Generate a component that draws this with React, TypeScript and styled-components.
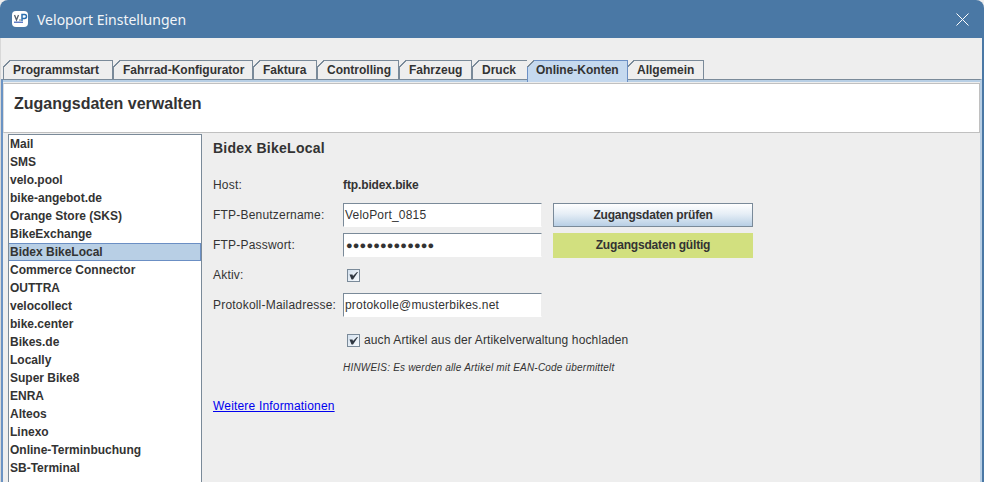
import React from "react";
import styled, { createGlobalStyle } from "styled-components";

const Global = createGlobalStyle`
  html, body { margin: 0; padding: 0; width: 984px; height: 482px; overflow: hidden; background: #eeeeee; }
  * { box-sizing: border-box; }
  body { font-family: "Liberation Sans", Arial, sans-serif; color: #333333; }
`;

const Win = styled.div`
  width: 984px;
  height: 482px;
  display: flex;
  flex-direction: column;
  overflow: hidden;
  background: #eeeeee;
`;
const TitleBar = styled.div`
  height: 38px;
  flex: none;
  background: #4a78a5;
  border-radius: 8px 8px 0 0;
  display: flex;
  align-items: center;
  padding: 0 15px 0 12px;
  gap: 9px;
  color: #f2f5f8;
`;
const TitleText = styled.span`
  flex: 1;
  font-family: "Noto Sans", "Open Sans", sans-serif;
  font-size: 14px;
`;
const Frame = styled.div`
  flex: 1;
  min-height: 0;
  padding: 22px 0 0 0;
  border-right: 2px solid #4a78a5;
  border-left: 1px solid #d8d8d8;
  display: flex;
  flex-direction: column;
`;
const TabStrip = styled.div`
  height: 19px;
  flex: none;
  display: flex;
  padding-left: 2px;
  position: relative;
  z-index: 1;
`;
const Tab = styled.div<{ $w: number; $active?: boolean }>`
  position: relative;
  width: ${(p) => p.$w}px;
  height: ${(p) => (p.$active ? 22 : 20)}px;
  flex: none;
  margin-right: ${(p) => (p.$active ? -1 : 0)}px;
  margin-left: ${(p) => (p.$active ? -1 : 0)}px;
  padding-left: ${(p) => (p.$active ? 8 : 9)}px;
  font-size: 12px;
  font-weight: 700;
  line-height: 18px;
  color: #333333;
  white-space: nowrap;
  background: ${(p) => (p.$active ? "#c5d9ef" : "#eeeeee")};
  border: 1px solid ${(p) => (p.$active ? "#6b8fc4" : "#7a8a99")};
  border-bottom: ${(p) => (p.$active ? "none" : "1px solid #7a8a99")};
  z-index: ${(p) => (p.$active ? 2 : 1)};
  &::before {
    content: "";
    position: absolute;
    left: -1px;
    top: -1px;
    width: 7px;
    height: 7px;
    background: linear-gradient(135deg, #eeeeee 0 48%, #7a8a99 48% 62%, transparent 62%);
  }
`;
const Pane = styled.div`
  flex: 1;
  min-height: 0;
  border-top: 1px solid #7a8a99;
  border-left: 2px solid #6a93c4;
  border-right: 2px solid #b8cfe5;
  padding-top: 3px;
  background: #eeeeee;
  box-shadow: inset 0 2px 0 #b8cfe5;
  display: flex;
  flex-direction: column;
`;
const Header = styled.div`
  height: 50px;
  flex: none;
  background: #ffffff;
  border-top: 1px solid #c0c0c0;
  border-right: 1px solid #c0c0c0;
  border-bottom: 1px solid #c0c0c0;
  border-left: 1px solid #dcdcdc;
  padding: 10px 0 0 10px;
  font-size: 16px;
  font-weight: 700;
  line-height: 20px;
  color: #333333;
`;
const Body = styled.div`
  flex: 1;
  min-height: 0;
  display: flex;
  padding-top: 1px;
`;
const List = styled.div`
  margin-left: 5px;
  width: 194px;
  flex: none;
  background: #ffffff;
  border: 1px solid #7a8a99;
  border-bottom: none;
`;
const Row = styled.div<{ $sel?: boolean }>`
  height: 18px;
  padding-left: 1px;
  font-size: 12px;
  font-weight: 700;
  line-height: 16px;
  color: #333333;
  white-space: nowrap;
  border: 1px solid ${(p) => (p.$sel ? "#6b8fc4" : "transparent")};
  border-left: 0;
  background: ${(p) => (p.$sel ? "#b8cfe5" : "transparent")};
`;
const Detail = styled.div`
  flex: 1;
  padding: 6px 0 0 11px;
  display: flex;
  flex-direction: column;
`;
const DetailTitle = styled.div`
  font-size: 14px;
  font-weight: 700;
  letter-spacing: 0.25px;
  line-height: 16px;
  height: 28px;
`;
const FormGrid = styled.div`
  margin-top: 2px;
  display: grid;
  grid-template-columns: 130px 199px 11px 200px;
  grid-auto-rows: 30px;
  align-items: center;
`;
const Label = styled.div`
  font-size: 12px;
  letter-spacing: 0.2px;
  white-space: nowrap;
  grid-column: 1;
`;
const HostValue = styled.div`
  grid-column: 2;
  font-size: 12px;
  font-weight: 700;
  letter-spacing: -0.12px;
`;
const Field = styled.div<{ $pw?: boolean }>`
  grid-column: 2;
  height: 24px;
  background: #ffffff;
  border-top: 1px solid #7a8a99;
  border-left: 1px solid #7a8a99;
  border-right: 1px solid #eeeeee;
  border-bottom: 1px solid #ffffff;
  padding-left: ${(p) => (p.$pw ? 2 : 1)}px;
  font-size: ${(p) => (p.$pw ? 11 : 12)}px;
  letter-spacing: ${(p) => (p.$pw ? "0.15px" : "0.2px")};
  line-height: 22px;
  white-space: nowrap;
  overflow: hidden;
`;
const PrimaryButton = styled.div`
  grid-column: 4;
  height: 24px;
  background: linear-gradient(#ffffff, #e6eef6 45%, #b8cfe5);
  border: 1px solid #7a8a99;
  font-size: 12px;
  font-weight: 700;
  letter-spacing: -0.18px;
  line-height: 22px;
  text-align: center;
`;
const Status = styled.div`
  grid-column: 4;
  height: 25px;
  background: #d2e07f;
  font-size: 12px;
  font-weight: 700;
  letter-spacing: -0.18px;
  line-height: 25px;
  text-align: center;
`;
const CheckBox = styled.span`
  width: 13px;
  height: 13px;
  flex: none;
  display: inline-flex;
  align-items: center;
  justify-content: center;
  background: linear-gradient(135deg, #d4e1ee, #f6f9fc);
  border: 1px solid #7a8a99;
`;
const CheckCell = styled.div`
  grid-column: 2;
  padding-left: 4px;
  display: flex;
  align-items: center;
`;
const OptionRow = styled.div`
  margin: 12px 0 0 134px;
  display: flex;
  align-items: center;
  gap: 4px;
  font-size: 12px;
  letter-spacing: 0.13px;
  height: 16px;
  white-space: nowrap;
`;
const Hint = styled.div`
  margin: 14px 0 0 130px;
  font-size: 10px;
  font-style: italic;
  letter-spacing: 0.2px;
  line-height: 12px;
  white-space: nowrap;
`;
const InfoLink = styled.a`
  margin-top: 25px;
  font-size: 12px;
  letter-spacing: 0.18px;
  line-height: 14px;
  color: #0000ee;
  text-decoration: underline;
  align-self: flex-start;
`;

const Check = () => (
  <svg width="11" height="11" viewBox="0 0 11 11">
    <path d="M1.5 4.5 H4.5 L5 6 L9 2 H10 L5 9.5 H3.5 Z" fill="#2f3640" />
  </svg>
);

const Logo = () => (
  <svg width="16" height="16" viewBox="0 0 16 16" style={{ flex: "none" }}>
    <rect x="0" y="0" width="16" height="16" rx="4" fill="#ffffff" />
    <path d="M2.5 4 L4.5 9 L6.5 4" fill="none" stroke="#55606c" strokeWidth="1.3" />
    <circle cx="8" cy="9" r="0.8" fill="#55606c" />
    <path d="M10 10 V3.6 H12.6 A1.8 1.8 0 0 1 12.6 7.4 H10" fill="none" stroke="#2a6fb0" strokeWidth="1.5" />
    <path d="M2 11.2 H11" stroke="#2a4fb0" strokeWidth="1.1" />
  </svg>
);

const Close = () => (
  <svg width="13" height="13" viewBox="0 0 13 13">
    <path d="M0.5 0.5 L12.5 12.5 M12.5 0.5 L0.5 12.5" stroke="#ffffff" strokeWidth="1" fill="none" />
  </svg>
);

const tabs: [string, number, boolean?][] = [
  ["Programmstart", 110],
  ["Fahrrad-Konfigurator", 140],
  ["Faktura", 64],
  ["Controlling", 82],
  ["Fahrzeug", 73],
  ["Druck", 56],
  ["Online-Konten", 101, true],
  ["Allgemein", 77],
];

const items = [
  "Mail", "SMS", "velo.pool", "bike-angebot.de", "Orange Store (SKS)", "BikeExchange",
  "Bidex BikeLocal", "Commerce Connector", "OUTTRA", "velocollect", "bike.center", "Bikes.de",
  "Locally", "Super Bike8", "ENRA", "Alteos", "Linexo", "Online-Terminbuchung", "SB-Terminal",
];

export default function App() {
  return (
    <Win>
      <Global />
      <TitleBar>
        <Logo />
        <TitleText>Veloport Einstellungen</TitleText>
        <Close />
      </TitleBar>
      <Frame>
        <TabStrip>
          {tabs.map(([t, w, a]) => (
            <Tab key={t} $w={w} $active={a}>{t}</Tab>
          ))}
        </TabStrip>
        <Pane>
          <Header>Zugangsdaten verwalten</Header>
          <Body>
            <List>
              {items.map((i) => (
                <Row key={i} $sel={i === "Bidex BikeLocal"}>{i}</Row>
              ))}
            </List>
            <Detail>
              <DetailTitle>Bidex BikeLocal</DetailTitle>
              <FormGrid>
                <Label>Host:</Label>
                <HostValue>ftp.bidex.bike</HostValue>
                <Label>FTP-Benutzername:</Label>
                <Field>VeloPort_0815</Field>
                <PrimaryButton>Zugangsdaten prüfen</PrimaryButton>
                <Label>FTP-Passwort:</Label>
                <Field $pw>●●●●●●●●●●●●●</Field>
                <Status>Zugangsdaten gültig</Status>
                <Label>Aktiv:</Label>
                <CheckCell><CheckBox><Check /></CheckBox></CheckCell>
                <Label>Protokoll-Mailadresse:</Label>
                <Field>protokolle@musterbikes.net</Field>
              </FormGrid>
              <OptionRow>
                <CheckBox><Check /></CheckBox>
                auch Artikel aus der Artikelverwaltung hochladen
              </OptionRow>
              <Hint>HINWEIS: Es werden alle Artikel mit EAN-Code übermittelt</Hint>
              <InfoLink>Weitere Informationen</InfoLink>
            </Detail>
          </Body>
        </Pane>
      </Frame>
    </Win>
  );
}
